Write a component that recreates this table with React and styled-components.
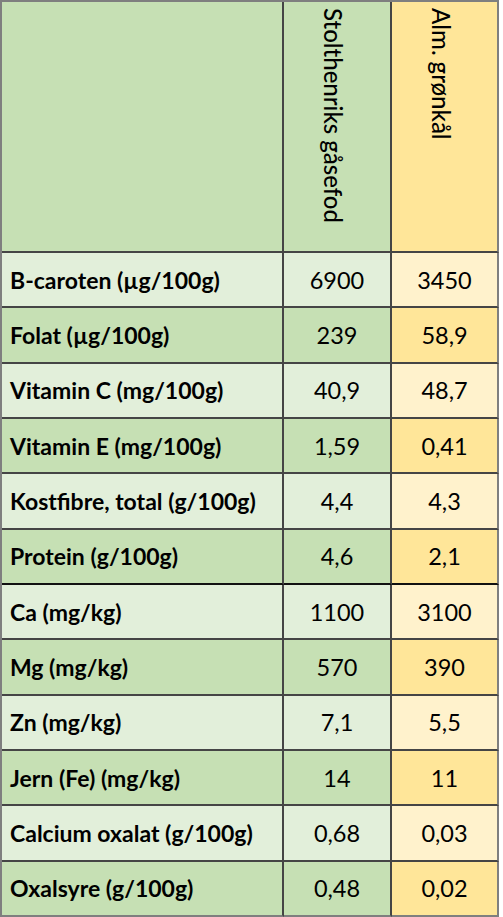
import React from "react";
import styled, { createGlobalStyle } from "styled-components";

const Global = createGlobalStyle`
  html, body { margin: 0; padding: 0; background: #ffffff; }
  body { font-family: Lato, "Open Sans", sans-serif; color: #000; }
`;

const COLORS = {
  dark: { label: "#C6E0B4", a: "#C6E0B4", b: "#FFE699" },
  light: { label: "#E2EFDA", a: "#E2EFDA", b: "#FFF2CC" },
};

const Table = styled.div`
  display: grid;
  grid-template-columns: 282px 108px 107px;
  grid-template-rows: 251px repeat(12, 55.33px);
  width: 499px;
  border-left: 2px solid #7f7f7f;
  border-top: 2px solid #7f7f7f;
  box-sizing: border-box;
`;

const Cell = styled.div`
  box-sizing: border-box;
  background: ${(p) => p.$bg};
  border-right: 2px solid ${(p) => (p.$lastCol ? "#7f7f7f" : "#454545")};
  border-bottom: 2px solid
    ${(p) => (p.$lastRow ? "#7f7f7f" : p.$thick ? "#111" : "#454545")};
  display: flex;
  align-items: center;
  min-width: 0;
`;

const HeaderCell = styled(Cell)`
  align-items: flex-start;
  justify-content: center;
  padding-top: 6px;
`;

const VerticalText = styled.span`
  writing-mode: vertical-rl;
  font-size: 24px;
  font-weight: 500;
  line-height: 1;
  white-space: nowrap;
  margin-left: ${(p) => p.$shift || 0}px;
`;

const LabelCell = styled(Cell)`
  padding-left: 8px;
  font-size: 23px;
  font-weight: 700;
  white-space: nowrap;
`;

const ValueCell = styled(Cell)`
  justify-content: center;
  font-size: 23.5px;
  font-weight: 400;
`;

const rows = [
  ["B-caroten (µg/100g)", "6900", "3450"],
  ["Folat (µg/100g)", "239", "58,9"],
  ["Vitamin C (mg/100g)", "40,9", "48,7"],
  ["Vitamin E (mg/100g)", "1,59", "0,41"],
  ["Kostfibre, total (g/100g)", "4,4", "4,3"],
  ["Protein (g/100g)", "4,6", "2,1"],
  ["Ca (mg/kg)", "1100", "3100"],
  ["Mg (mg/kg)", "570", "390"],
  ["Zn (mg/kg)", "7,1", "5,5"],
  ["Jern (Fe) (mg/kg)", "14", "11"],
  ["Calcium oxalat (g/100g)", "0,68", "0,03"],
  ["Oxalsyre (g/100g)", "0,48", "0,02"],
];

export default function App() {
  return (
    <>
      <Global />
      <Table>
        <HeaderCell $bg="#C6E0B4" />
        <HeaderCell $bg="#C6E0B4">
          <VerticalText $shift={-8}>Stolthenriks gåsefod</VerticalText>
        </HeaderCell>
        <HeaderCell $bg="#FFE699" $lastCol>
          <VerticalText $shift={-8}>Alm. grønkål</VerticalText>
        </HeaderCell>
        {rows.map(([label, a, b], i) => {
          const tone = i % 2 === 0 ? COLORS.light : COLORS.dark;
          const thick = i === 5;
          const lastRow = i === rows.length - 1;
          return (
            <React.Fragment key={label}>
              <LabelCell $bg={tone.label} $thick={thick} $lastRow={lastRow}>
                {label}
              </LabelCell>
              <ValueCell $bg={tone.a} $thick={thick} $lastRow={lastRow}>
                {a}
              </ValueCell>
              <ValueCell $bg={tone.b} $thick={thick} $lastRow={lastRow} $lastCol>
                {b}
              </ValueCell>
            </React.Fragment>
          );
        })}
      </Table>
    </>
  );
}
